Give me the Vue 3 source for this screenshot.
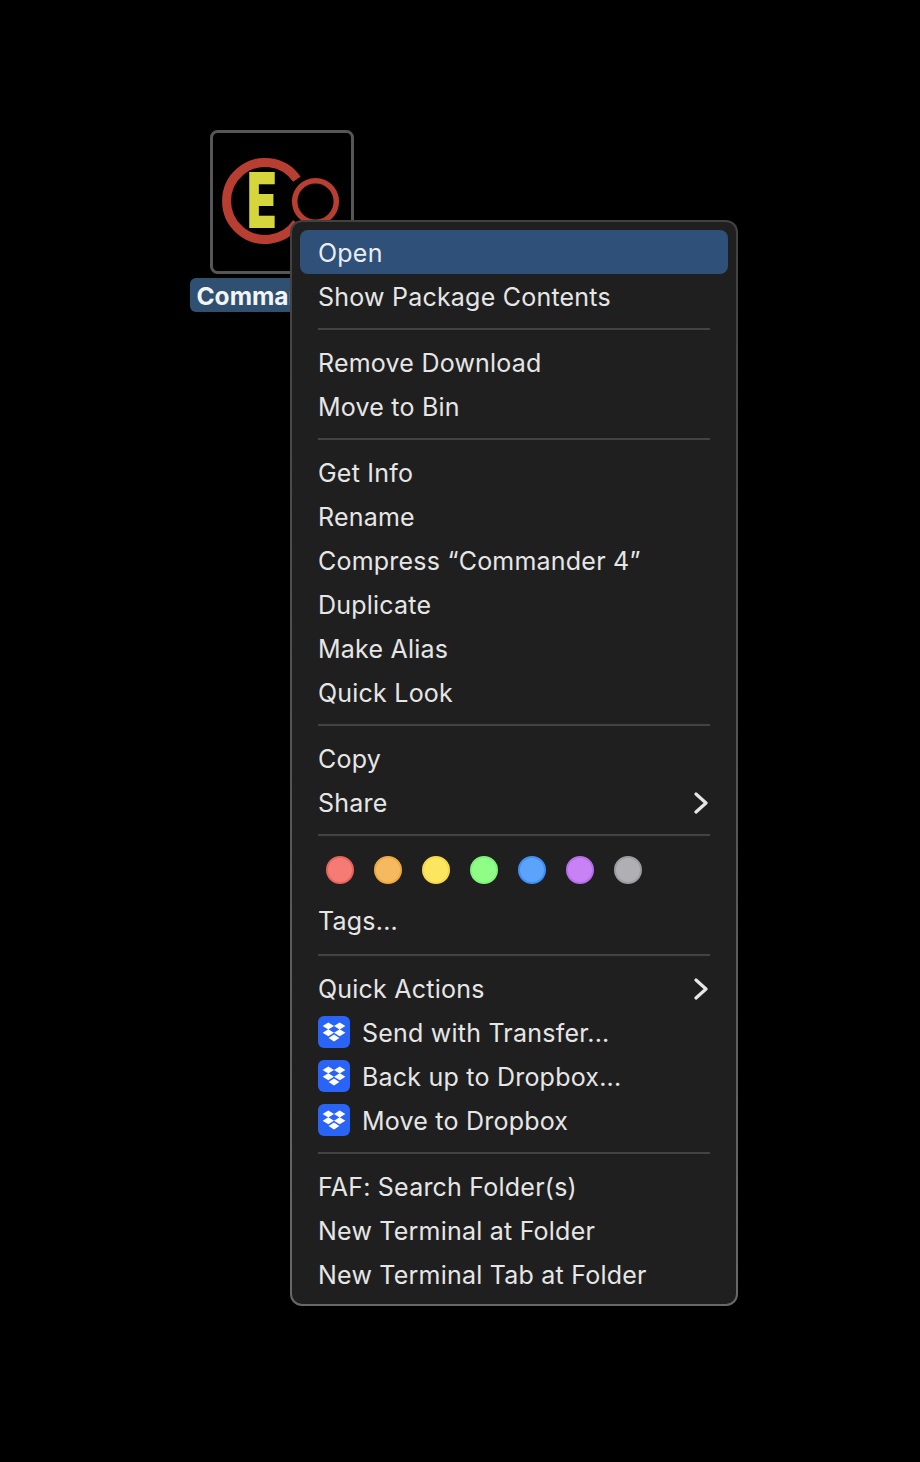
<script setup>
const dots = [
  { fill: '#f47c74', edge: '#e8635c' },
  { fill: '#f5b95f', edge: '#f0a844' },
  { fill: '#fde65f', edge: '#f5d94a' },
  { fill: '#8ffe86', edge: '#80f37a' },
  { fill: '#5ca4fb', edge: '#3f8ef5' },
  { fill: '#c882f5', edge: '#b76fe9' },
  { fill: '#b0afb3', edge: '#9c9ba0' },
]
</script>

<template>
  <div class="desktop">
    <div class="file-icon">
      <svg width="144" height="144" viewBox="0 0 144 144">
        <rect x="1.5" y="1.5" width="141" height="141" rx="6" fill="#000" stroke="#565656" stroke-width="3" />
        <path d="M86.8 49.2 A38.5 38.5 0 1 0 86.8 92.8" fill="none" stroke="#b93e32" stroke-width="9" />
        <circle cx="105.5" cy="71.5" r="20.8" fill="none" stroke="#b93e32" stroke-width="5.5" />
        <text class="logo-e" x="0" y="0" transform="translate(37 98) scale(.63 1)">E</text>
      </svg>
    </div>
    <div class="file-label">Commander 4</div>

    <div class="menu">
      <div class="row active">Open</div>
      <div class="row">Show Package Contents</div>
      <div class="sep"></div>
      <div class="row">Remove Download</div>
      <div class="row">Move to Bin</div>
      <div class="sep"></div>
      <div class="row">Get Info</div>
      <div class="row">Rename</div>
      <div class="row">Compress “Commander 4”</div>
      <div class="row">Duplicate</div>
      <div class="row">Make Alias</div>
      <div class="row">Quick Look</div>
      <div class="sep"></div>
      <div class="row">Copy</div>
      <div class="row">
        <span>Share</span>
        <svg class="chevron" width="16" height="22" viewBox="0 0 16 22"><path d="M2 2 L12 11 L2 20" /></svg>
      </div>
      <div class="sep"></div>
      <div class="dots">
        <span v-for="d in dots" :key="d.fill" class="dot" :style="{ background: d.fill, borderColor: d.edge }"></span>
      </div>
      <div class="row">Tags...</div>
      <div class="sep after-tags"></div>
      <div class="row">
        <span>Quick Actions</span>
        <svg class="chevron" width="16" height="22" viewBox="0 0 16 22"><path d="M2 2 L12 11 L2 20" /></svg>
      </div>
      <div v-for="t in ['Send with Transfer...', 'Back up to Dropbox...', 'Move to Dropbox']" :key="t" class="row with-icon">
        <svg class="tile" width="32" height="32" viewBox="0 0 32 32">
          <rect width="32" height="32" rx="6" fill="#2a64f6" />
          <path fill="#fff" d="M10.3 6.6 L16 10.1 L10.3 13.6 L4.6 10.1 Z M21.7 6.6 L27.4 10.1 L21.7 13.6 L16 10.1 Z M10.3 13.3 L16 16.8 L10.3 20.3 L4.6 16.8 Z M21.7 13.3 L27.4 16.8 L21.7 20.3 L16 16.8 Z M16 18.6 L21.4 22 L16 25.6 L10.6 22 Z" />
        </svg>
        <span>{{ t }}</span>
      </div>
      <div class="sep"></div>
      <div class="row">FAF: Search Folder(s)</div>
      <div class="row">New Terminal at Folder</div>
      <div class="row">New Terminal Tab at Folder</div>
    </div>
  </div>
</template>

<style>
html, body { margin: 0; background: #000; }
</style>

<style scoped>
.desktop {
  position: relative;
  width: 920px;
  height: 1462px;
  background: #000;
  overflow: hidden;
  font-family: Inter, "Liberation Sans", sans-serif;
}
.file-icon {
  position: absolute;
  left: 210px;
  top: 130px;
  width: 144px;
  height: 144px;
}
.file-icon svg { display: block; }
.logo-e {
  font-family: Inter, "Liberation Sans", sans-serif;
  font-weight: 900;
  font-size: 77px;
  fill: #d5d63b;
}
.file-label {
  position: absolute;
  left: 190px;
  top: 278px;
  width: 102px;
  height: 34px;
  box-sizing: border-box;
  overflow: hidden;
  line-height: 36px;
  padding: 0 6.5px;
  border-radius: 6px 0 0 6px;
  background: #2f5070;
  color: #f2f4f6;
  font-size: 24.5px;
  font-weight: 700;
  white-space: nowrap;
}
.menu {
  position: absolute;
  left: 290px;
  top: 220px;
  width: 448px;
  height: 1086px;
  box-sizing: border-box;
  padding: 8px;
  border: 2px solid transparent;
  border-radius: 12px;
  background: linear-gradient(#1f1f1f, #1f1f1f) padding-box, linear-gradient(#414141, #686868) border-box;
  color: #e6e6e6;
  font-size: 25px;
  letter-spacing: 0.22px;
}
.row {
  height: 44px;
  box-sizing: border-box;
  padding: 2px 18px 0;
  display: flex;
  align-items: center;
  justify-content: space-between;
  white-space: nowrap;
}
.row.active {
  background: #2f5078;
  border-radius: 8px;
  color: #e9edf2;
}
.row.with-icon {
  justify-content: flex-start;
  gap: 12px;
}
.tile {
  flex: none;
  margin-top: -2px;
}
.chevron {
  fill: none;
  stroke: #e6e6e6;
  stroke-width: 3.2;
  stroke-linecap: round;
  stroke-linejoin: round;
}
.sep {
  height: 2px;
  margin: 10px 18px;
  background: #434343;
}
.sep.after-tags { margin-top: 12px; }
.dots {
  display: flex;
  gap: 20px;
  padding: 10px 26px 14px;
}
.dot {
  width: 28px;
  height: 28px;
  box-sizing: border-box;
  border: 2px solid;
  border-radius: 50%;
}
</style>
